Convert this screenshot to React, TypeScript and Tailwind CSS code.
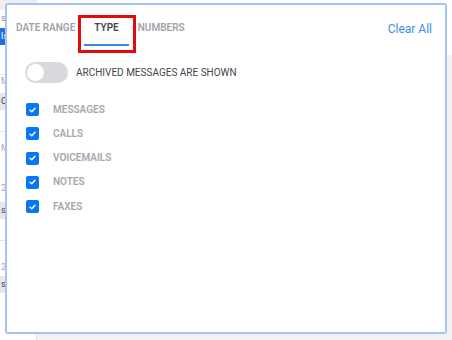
import { useState } from 'react';

const TYPES = ['MESSAGES', 'CALLS', 'VOICEMAILS', 'NOTES', 'FAXES'];

function CheckBox() {
  return (
    <span className="w-[13px] h-[13px] rounded-[2px] bg-[#0a77f2] flex items-center justify-center">
      <svg width="7" height="6" viewBox="0 0 7 6" fill="none">
        <path d="M1 3.2 L2.8 4.8 L6 1.2" stroke="white" strokeWidth="1.4" strokeLinecap="round" strokeLinejoin="round" />
      </svg>
    </span>
  );
}

export default function App() {
  const [archived, setArchived] = useState(false);

  return (
    <div className="relative w-[452px] h-[340px] overflow-hidden bg-[#f3f3f3] flex font-['Roboto',Arial,sans-serif]">
      {/* app behind the popover */}
      <div className="w-[37px] h-full bg-white border-r border-[#e2e2e2] flex flex-col text-[9px] leading-[12px] text-[#888]">
        <div className="h-[10px] bg-[#eeeeee]" />
        <div className="h-[18px] pl-[1px] pt-[2px]">se</div>
        <div className="h-[17px] bg-[#1b73e0] text-white pl-[1px] pt-[2px]">ls</div>
        <div className="h-[30px] border-b border-[#e5e5e5]" />
        <div className="h-[18px] pl-[1px] text-[#aaa]">M/</div>
        <div className="h-[17px] bg-[#e6e6e6] pl-[1px] pt-[2px] text-[#444]">Co</div>
        <div className="h-[22px] border-b border-[#e5e5e5]" />
        <div className="h-[50px] pl-[1px] pt-[10px] text-[#aaa]">M/</div>
        <div className="h-[20px] pl-[1px] text-[#aaa]">2/</div>
        <div className="h-[17px] bg-[#e6e6e6] pl-[1px] pt-[2px] text-[#444]">sa</div>
        <div className="h-[22px] border-b border-[#e5e5e5]" />
        <div className="h-[35px] pl-[1px] pt-[20px] text-[#aaa]">2/</div>
        <div className="h-[17px] bg-[#e6e6e6] pl-[1px] pt-[2px] text-[#444]">sa</div>
        <div className="flex-1" />
      </div>
      <div className="flex-1 flex flex-col">
        <div className="h-[55px] bg-white" />
        <div className="flex-1 bg-[#f3f3f3]" />
      </div>

      {/* filter popover */}
      <div className="absolute left-[5px] top-[3px] w-[442px] h-[331px] bg-white border-2 border-[#a6c3f6] rounded-[3px] flex flex-col">
        <div className="flex items-start justify-between pr-[13px]">
          <div className="flex">
            <div className="px-[9px] pt-[17px] h-[41px] text-[10px] leading-[12px] font-semibold text-[#a3a3ab]">DATE RANGE</div>
            <div className="relative px-[10px] pt-[17px] h-[41px] text-[10px] leading-[12px] font-semibold text-[#45454d]">
              TYPE
              <div className="absolute left-0 right-0 bottom-0 h-[2px] bg-[#3b87e3]" />
              <div className="absolute -left-[6px] -right-[7px] top-[10px] -bottom-[7px] border-[3px] border-[#e00b0b]" />
            </div>
            <div className="px-[9px] pt-[17px] h-[41px] text-[10px] leading-[12px] font-semibold text-[#a3a3ab]">NUMBERS</div>
          </div>
          <button className="pt-[17px] text-[12px] leading-[14px] text-[#3a8ee6]">Clear All</button>
        </div>

        <div className="flex items-center pl-[18px] mt-[16px] gap-[8px]">
          <button
            onClick={() => setArchived(!archived)}
            className="w-[43px] h-[21px] rounded-full bg-[#d9d9de] p-[2px] flex"
          >
            <span className={`w-[17px] h-[17px] rounded-full bg-white ${archived ? 'ml-auto' : ''}`} />
          </button>
          <span className="text-[10px] leading-[12px] text-[#45454d]">ARCHIVED MESSAGES ARE SHOWN</span>
        </div>

        <div className="flex flex-col pl-[19px] mt-[20px] gap-[11.3px]">
          {TYPES.map(t => (
            <div key={t} className="flex items-center gap-[14px] h-[13px]">
              <CheckBox />
              <span className="text-[10px] leading-[12px] font-semibold text-[#a6a6ae]">{t}</span>
            </div>
          ))}
        </div>
      </div>
    </div>
  );
}
